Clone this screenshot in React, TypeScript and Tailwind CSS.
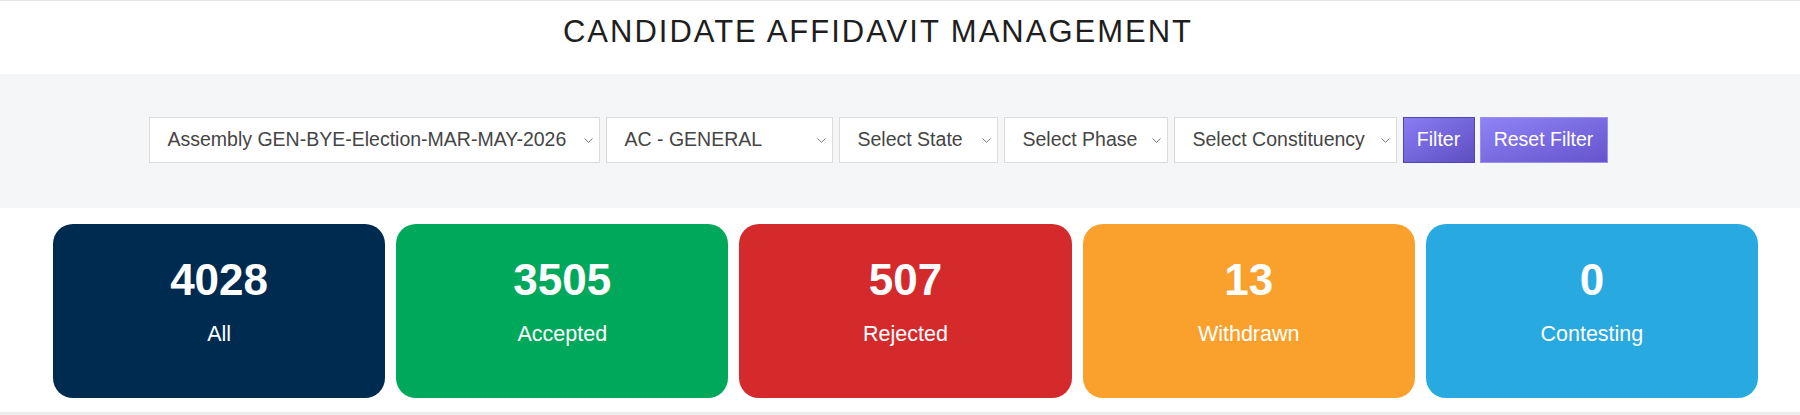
import React from "react";

const selects = [
  { label: "Assembly GEN-BYE-Election-MAR-MAY-2026", w: "w-[451px]" },
  { label: "AC - GENERAL", w: "w-[227px]" },
  { label: "Select State", w: "w-[159px]" },
  { label: "Select Phase", w: "w-[164px]" },
  { label: "Select Constituency", w: "w-[223px]" },
];

const cards = [
  { n: "4028", label: "All", bg: "bg-[#002b50]" },
  { n: "3505", label: "Accepted", bg: "bg-[#00a85b]" },
  { n: "507", label: "Rejected", bg: "bg-[#d42a2c]" },
  { n: "13", label: "Withdrawn", bg: "bg-[#f9a12c]" },
  { n: "0", label: "Contesting", bg: "bg-[#28a9df]" },
];

function Chevron() {
  return (
    <svg width="9" height="5" viewBox="0 0 9 5" className="shrink-0">
      <path d="M0.5 0.5 L4.5 4.3 L8.5 0.5" fill="none" stroke="#777" strokeWidth="1" />
    </svg>
  );
}

export default function App() {
  return (
    <div
      className="w-[1800px] h-[415px] bg-white overflow-hidden"
      style={{ fontFamily: '"Liberation Sans", Arial, sans-serif' }}
    >
      <div className="h-[74px] border-t border-[#e4e4e4] pr-[44px]">
        <h1 className="pt-[14.5px] text-center text-[31px] leading-[31px] tracking-[2px] text-[#1e1e1e] font-normal">
          CANDIDATE AFFIDAVIT MANAGEMENT
        </h1>
      </div>
      <div className="h-[134px] bg-[#f5f6f7] pt-[43px] pr-[44px] flex justify-center items-start gap-[6px]">
        {selects.map((s) => (
          <div
            key={s.label}
            className={`${s.w} h-[46px] bg-white border border-[#dcdcdc] flex items-center justify-between pl-[18px] pr-[6px] text-[19.5px] text-[#454545]`}
          >
            <span className="whitespace-nowrap">{s.label}</span>
            <Chevron />
          </div>
        ))}
        <button className="w-[72px] h-[46px] border border-[#5446b0] bg-linear-to-br from-[#8a7cf3] to-[#5e4ec2] text-white text-[19.5px]">
          Filter
        </button>
        <button className="w-[128px] h-[46px] -ml-px border border-[#9a8ef0] bg-linear-to-br from-[#8f82f6] to-[#6654cc] text-white text-[19.5px]">
          Reset Filter
        </button>
      </div>
      <div className="pt-[16px] pl-[53px] pr-[42px] grid grid-cols-5 gap-[11px]">
        {cards.map((c) => (
          <div
            key={c.label}
            className={`${c.bg} h-[174px] rounded-[20px] flex flex-col items-center pt-[33.5px] text-white`}
          >
            <div className="text-[44px] leading-[44px] font-bold">{c.n}</div>
            <div className="mt-[22px] text-[21.5px] leading-[21px]">{c.label}</div>
          </div>
        ))}
      </div>
      <div className="mt-[14px] h-[3px] bg-[#ececec]" />
    </div>
  );
}
